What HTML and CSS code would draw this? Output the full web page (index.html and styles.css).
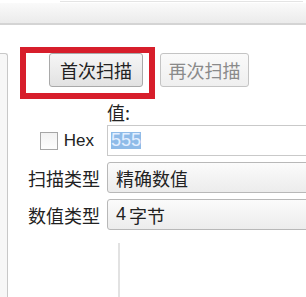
FILE: index.html
```html
<!DOCTYPE html>
<html>

<head>
    <meta http-equiv="content-type" content="text/html; charset=UTF-8">
    <title>扫描</title>
    <link rel="stylesheet" href="styles.css">
</head>

<body>
    <div class="topline"></div>
    <div class="topbar"></div>

    <div class="wrap">
        <div class="stub"></div>
        <div class="panel">
            <div class="scanbar">
                <button class="btn">首次扫描</button>
                <button class="btn off">再次扫描</button>
                <div class="mark"></div>
            </div>

            <div class="form">
                <div class="caption"></div>
                <div class="valuelabel">值:</div>

                <div class="caption hex">
                    <span class="check"></span>
                    <span>Hex</span>
                </div>
                <div class="field text"><span class="sel">555</span></div>

                <div class="caption cjk">扫描类型</div>
                <div class="field combo">精确数值</div>

                <div class="caption cjk">数值类型</div>
                <div class="field combo"><span class="num">4</span>字节</div>
            </div>

            <div class="lower"></div>
        </div>
    </div>
</body>

</html>
```

FILE: styles.css
```css
body {
    margin: 0;
    width: 306px;
    height: 297px;
    overflow: hidden;
    background: #fff;
    font-family: "Noto Sans CJK SC", "Liberation Sans", sans-serif;
    color: #222;
}

.topline {
    margin: 1px 3px 0 60px;
    border-top: 1px solid #e4e4e4;
}

.topbar {
    margin-top: 1px;
    height: 20px;
    background: linear-gradient(#fafafa, #ebebeb);
    border-bottom: 2px solid #d4d4d4;
}

.wrap {
    display: flex;
    margin-top: 28px;
}

.stub {
    flex-shrink: 0;
    width: 7px;
    height: 243px;
    border: 1px solid #c8c8c8;
    border-left: none;
    border-bottom: none;
    border-top-right-radius: 3px;
    background: #f7f7f7;
}

.panel {
    flex: 1;
    min-width: 0;
}

.scanbar {
    position: relative;
    display: flex;
    gap: 17px;
    padding-left: 41px;
}

.btn {
    width: 94px;
    height: 34px;
    padding: 0;
    border: 1px solid #a9a9a9;
    border-radius: 3px;
    background: linear-gradient(#f6f6f6, #e2e2e2);
    font-family: "Noto Sans CJK SC", sans-serif;
    font-size: 18px;
    color: #222;
}

.btn.off {
    width: 89px;
    border-color: #c4c4c4;
    background: linear-gradient(#fafafa, #efefef);
    color: #8a8a8a;
}

.mark {
    position: absolute;
    left: 12px;
    top: -6px;
    width: 135px;
    height: 52px;
    box-sizing: border-box;
    border: 6px solid #d71e2b;
}

.form {
    display: grid;
    grid-template-columns: 92px 1fr;
    column-gap: 7px;
    margin-top: 12px;
    overflow-x: clip;
}

.caption {
    display: flex;
    justify-content: flex-end;
    align-items: center;
    font-size: 18px;
}

.valuelabel {
    font-size: 18px;
}

.hex {
    font-family: "Liberation Sans", sans-serif;
    font-size: 17px;
    gap: 6px;
    padding-right: 6px;
}

.check {
    width: 16px;
    height: 16px;
    border: 1px solid #a6a6a6;
    background: linear-gradient(#f2f2f2, #fdfdfd);
}

.cjk {
    color: #222;
}

.field {
    box-sizing: border-box;
    display: flex;
    align-items: center;
    margin-right: -4px;
    font-size: 18px;
}

.text {
    height: 31px;
    padding-left: 3px;
    border: 1px solid #c9c9c9;
    font-family: "Liberation Sans", sans-serif;
}

.sel {
    background: #8fbbe8;
    color: #e3efff;
    line-height: 17px;
}

.combo {
    height: 31px;
    padding-left: 8px;
    border: 1px solid #b8b8b8;
    border-radius: 3px;
    background: linear-gradient(#fbfbfb, #ececec);
}

.num {
    font-family: "Liberation Sans", sans-serif;
    margin-right: 3px;
}

.hex + .field + .caption,
.hex + .field + .caption + .combo {
    margin-top: 6px;
}

.combo + .caption,
.combo + .caption + .combo {
    margin-top: 6px;
}

.lower {
    margin: 13px 0 0 110px;
    height: 60px;
    border-left: 2px solid #e2e2e2;
}
```
